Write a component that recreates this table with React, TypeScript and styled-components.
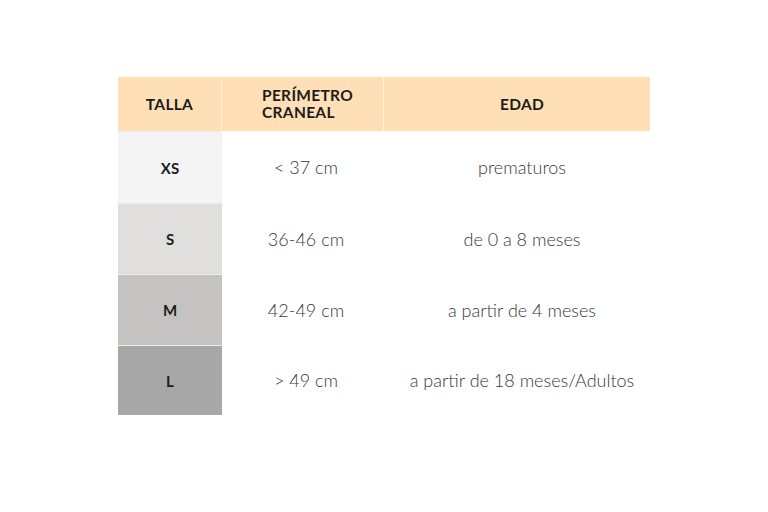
import React from 'react';
import styled, { createGlobalStyle } from 'styled-components';

interface SizeRow {
  size: string;
  perimeter: string;
  age: string;
  shade: string;
}

const rows: SizeRow[] = [
  { size: 'XS', perimeter: '< 37 cm', age: 'prematuros', shade: '#f4f4f4' },
  { size: 'S', perimeter: '36-46 cm', age: 'de 0 a 8 meses', shade: '#e0dfdd' },
  { size: 'M', perimeter: '42-49 cm', age: 'a partir de 4 meses', shade: '#c4c3c1' },
  { size: 'L', perimeter: '> 49 cm', age: 'a partir de 18 meses/Adultos', shade: '#a7a7a7' },
];

const GlobalStyle = createGlobalStyle`
  html, body {
    margin: 0;
    padding: 0;
    background: #ffffff;
  }
  body {
    font-family: Lato, "Open Sans", sans-serif;
  }
`;

const Page = styled.div`
  width: 768px;
  height: 512px;
  padding: 77px 0 0 118px;
  box-sizing: border-box;
`;

const Table = styled.div`
  display: grid;
  grid-template-columns: 104px 162px 266px;
  grid-template-rows: 54px 72px 71px 71px 70px;
  width: 532px;
`;

const HeadCell = styled.div<{ $divider?: boolean; $shift?: number }>`
  display: flex;
  align-items: center;
  justify-content: center;
  box-sizing: border-box;
  padding-left: ${p => p.$shift ?? 0}px;
  background: #ffe0b6;
  border-right: ${p => (p.$divider ? '1px solid #fff0da' : 'none')};
  font-family: Lato, sans-serif;
  font-weight: 700;
  font-size: 15.5px;
  line-height: 17px;
  color: #1c1c1c;
  letter-spacing: 0.3px;
`;

const HeadLines = styled.span`
  display: block;
  text-align: left;
`;

const SizeCell = styled.div<{ $shade: string }>`
  display: flex;
  align-items: center;
  justify-content: center;
  background: ${p => p.$shade};
  border-top: 1px solid #ececec;
  font-family: Lato, sans-serif;
  font-weight: 700;
  font-size: 15px;
  color: #1c1c1c;
`;

const ValueCell = styled.div<{ $shift: number }>`
  display: flex;
  align-items: center;
  justify-content: center;
  box-sizing: border-box;
  padding-left: ${p => p.$shift}px;
  font-family: Lato, sans-serif;
  font-weight: 300;
  font-size: 18px;
  color: #383838;
`;

export default function App() {
  return (
    <Page>
      <GlobalStyle />
      <Table>
        <HeadCell $divider>TALLA</HeadCell>
        <HeadCell $divider $shift={10}>
          <HeadLines>
            PERÍMETRO
            <br />
            CRANEAL
          </HeadLines>
        </HeadCell>
        <HeadCell $shift={10}>EDAD</HeadCell>
        {rows.map(r => (
          <React.Fragment key={r.size}>
            <SizeCell $shade={r.shade}>{r.size}</SizeCell>
            <ValueCell $shift={6}>{r.perimeter}</ValueCell>
            <ValueCell $shift={10}>{r.age}</ValueCell>
          </React.Fragment>
        ))}
      </Table>
    </Page>
  );
}
